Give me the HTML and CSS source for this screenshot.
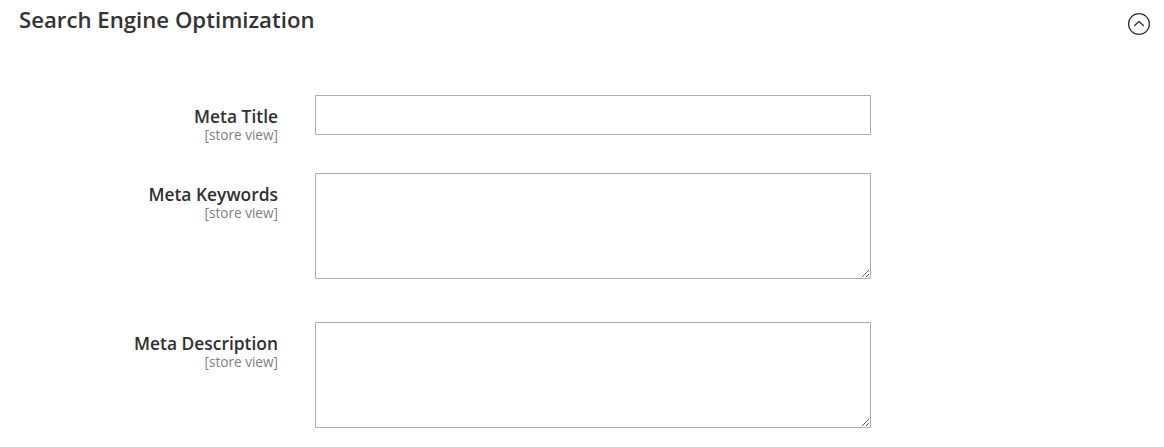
FILE: index.html
```html
<!DOCTYPE html>
<html lang="en">
<head>
<meta charset="utf-8">
<title>Search Engine Optimization</title>
<link rel="stylesheet" href="styles.css">
</head>
<body>
<section class="seo">
  <header class="seo-head">
    <h2 class="seo-title">Search Engine Optimization</h2>
    <span class="seo-toggle">
      <svg width="24" height="24" viewBox="0 0 24 24" aria-hidden="true">
        <circle cx="12" cy="12" r="10.4" fill="none" stroke="#333" stroke-width="1.3"/>
        <path d="M7.6 13.6 L12 9.4 L16.4 13.6" fill="none" stroke="#333" stroke-width="1.4" stroke-linecap="round" stroke-linejoin="round"/>
      </svg>
    </span>
  </header>
  <div class="seo-fields">
    <div class="field field-title">
      <label class="field-label"><span class="label-text">Meta Title</span><span class="scope">[store view]</span></label>
      <input class="control input" type="text">
    </div>
    <div class="field field-keywords">
      <label class="field-label"><span class="label-text">Meta Keywords</span><span class="scope">[store view]</span></label>
      <textarea class="control area"></textarea>
    </div>
    <div class="field field-desc">
      <label class="field-label"><span class="label-text">Meta Description</span><span class="scope">[store view]</span></label>
      <textarea class="control area"></textarea>
    </div>
  </div>
</section>
</body>
</html>
```

FILE: styles.css
```css
html, body {
  margin: 0;
  padding: 0;
  background: #ffffff;
}
body {
  font-family: "Open Sans", "Noto Sans", sans-serif;
  color: #303030;
  overflow: hidden;
}
.seo {
  width: 1164px;
}
.seo-head {
  display: flex;
  justify-content: space-between;
  align-items: flex-start;
  padding: 6px 13px 0 19px;
  height: 95px;
  box-sizing: border-box;
}
.seo-title {
  margin: 0;
  font-size: 22.2px;
  line-height: 28px;
  font-weight: 600;
  color: #333333;
}
.seo-toggle {
  display: block;
  width: 24px;
  height: 24px;
  margin-top: 6px;
}
.seo-toggle svg {
  display: block;
}
.seo-fields {
  display: flex;
  flex-direction: column;
}
.field {
  display: grid;
  grid-template-columns: 278px 556px;
  column-gap: 37px;
  align-items: start;
}
.field-keywords {
  margin-top: 38px;
}
.field-desc {
  margin-top: 43px;
}
.field-label {
  display: flex;
  flex-direction: column;
  align-items: flex-end;
  text-align: right;
  padding-top: 10px;
  margin-bottom: -20px;
}
.label-text {
  font-size: 17.4px;
  line-height: 22px;
  font-weight: 600;
  color: #303030;
}
.scope {
  font-size: 13.6px;
  line-height: 16px;
  color: #808080;
  margin-top: 0;
}
.control {
  box-sizing: border-box;
  width: 556px;
  border: 1px solid #adadad;
  border-radius: 1px;
  background: #fff;
  font-family: inherit;
  font-size: 14px;
  margin: 0;
  padding: 6px 10px;
}
.input {
  height: 40px;
}
.area {
  height: 106px;
  resize: vertical;
}
```
